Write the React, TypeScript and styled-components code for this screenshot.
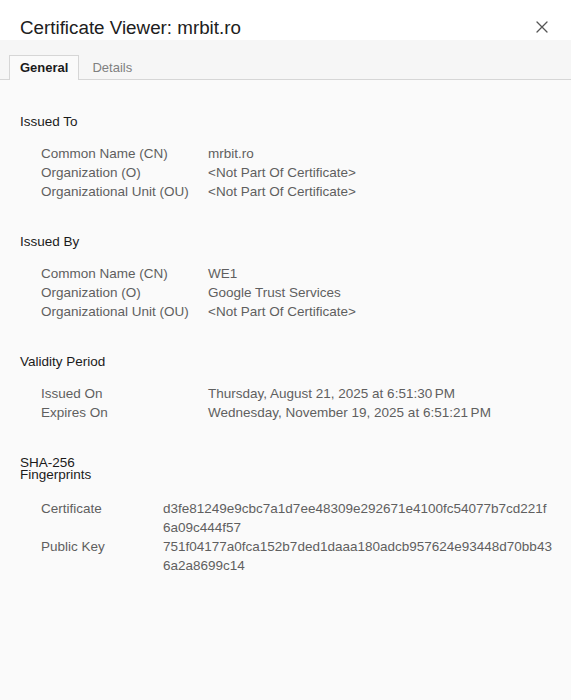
import * as React from 'react';
import styled, { createGlobalStyle } from 'styled-components';

const GlobalStyle = createGlobalStyle`
  html, body {
    margin: 0;
    padding: 0;
    background: #fafafa;
  }
  body {
    font-family: "Liberation Sans", Arial, sans-serif;
    -webkit-font-smoothing: antialiased;
  }
`;

const Dialog = styled.div`
  min-height: 100vh;
  background: #fafafa;
  color: #5a5a5a;
  font-size: 13.5px;
`;

const Header = styled.div`
  height: 40px;
  box-sizing: border-box;
  padding: 16px 20px 0 20px;
  display: flex;
  align-items: flex-start;
  justify-content: space-between;
  background: #ffffff;
`;

const Title = styled.h1`
  margin: 0;
  font-size: 18.8px;
  line-height: 24px;
  font-weight: 400;
  color: #202020;
`;

const CloseButton = styled.button`
  margin: 3px 1px 0 0;
  padding: 0;
  width: 16px;
  height: 16px;
  border: none;
  background: transparent;
  display: flex;
  align-items: center;
  justify-content: center;
  cursor: pointer;
`;

const TabStrip = styled.div`
  display: flex;
  gap: 2px;
  padding: 15px 9px 0 9px;
  background: #f6f6f6;
  border-bottom: 1px solid #d6d6d6;
`;

const Tab = styled.div<{ $active?: boolean }>`
  height: 24px;
  line-height: 24px;
  padding: 0 10px;
  margin-bottom: -1px;
  font-size: 13px;
  border: 1px solid ${(p) => (p.$active ? '#d6d6d6' : 'transparent')};
  border-bottom: none;
  background: ${(p) => (p.$active ? '#fafafa' : 'transparent')};
  color: ${(p) => (p.$active ? '#1a1a1a' : '#808080')};
  font-weight: ${(p) => (p.$active ? 700 : 400)};
`;

const Content = styled.div`
  padding: 36px 20px 40px 20px;
  display: flex;
  flex-direction: column;
  gap: 35px;
`;

const Section = styled.section`
  display: flex;
  flex-direction: column;
  gap: 16px;
`;

// the fingerprint heading wraps onto two lines
const Heading = styled.h2<{ $narrow?: boolean }>`
  margin: 0 0 ${(p) => (p.$narrow ? '2px' : '0')} 0;
  font-size: 13.5px;
  line-height: 12px;
  font-weight: 400;
  color: #1a1a1a;
  max-width: ${(p) => (p.$narrow ? '90px' : 'none')};
`;

const Rows = styled.div<{ $labelWidth: number }>`
  display: grid;
  grid-template-columns: ${(p) => p.$labelWidth}px 1fr;
  padding-left: 21px;
  line-height: 19px;
`;

const Label = styled.div`
  color: #5f5f5f;
`;

const Value = styled.div`
  color: #5f5f5f;
`;

const HashLine = styled.div`
  white-space: nowrap;
`;

type Row = { label: string; value: string; hash?: boolean };
type Group = { title: string; labelWidth: number; narrow?: boolean; rows: Row[] };

const NOT_PART = '<Not Part Of Certificate>';

const groups: Group[] = [
  {
    title: 'Issued To',
    labelWidth: 167,
    rows: [
      { label: 'Common Name (CN)', value: 'mrbit.ro' },
      { label: 'Organization (O)', value: NOT_PART },
      { label: 'Organizational Unit (OU)', value: NOT_PART },
    ],
  },
  {
    title: 'Issued By',
    labelWidth: 167,
    rows: [
      { label: 'Common Name (CN)', value: 'WE1' },
      { label: 'Organization (O)', value: 'Google Trust Services' },
      { label: 'Organizational Unit (OU)', value: NOT_PART },
    ],
  },
  {
    title: 'Validity Period',
    labelWidth: 167,
    rows: [
      { label: 'Issued On', value: 'Thursday, August 21, 2025 at 6:51:30\u202FPM' },
      { label: 'Expires On', value: 'Wednesday, November 19, 2025 at 6:51:21\u202FPM' },
    ],
  },
  {
    title: 'SHA-256 Fingerprints',
    labelWidth: 122,
    narrow: true,
    rows: [
      {
        label: 'Certificate',
        value: 'd3fe81249e9cbc7a1d7ee48309e292671e4100fc54077b7cd221f6a09c444f57',
        hash: true,
      },
      {
        label: 'Public Key',
        value: '751f04177a0fca152b7ded1daaa180adcb957624e93448d70bb436a2a8699c14',
        hash: true,
      },
    ],
  },
];

// fingerprints wrap after 53 hex digits
const chunk = (s: string, n: number) => {
  const out: string[] = [];
  for (let i = 0; i < s.length; i += n) out.push(s.slice(i, i + n));
  return out;
};

const CloseIcon = () => (
  <svg width="12" height="12" viewBox="0 0 12 12">
    <path d="M1 1 L11 11 M11 1 L1 11" stroke="#555" strokeWidth="1.3" strokeLinecap="round" />
  </svg>
);

export default function App() {
  return (
    <Dialog>
      <GlobalStyle />
      <Header>
        <Title>Certificate Viewer: mrbit.ro</Title>
        <CloseButton aria-label="Close">
          <CloseIcon />
        </CloseButton>
      </Header>
      <TabStrip>
        <Tab $active>General</Tab>
        <Tab>Details</Tab>
      </TabStrip>
      <Content>
        {groups.map((g) => (
          <Section key={g.title}>
            <Heading $narrow={g.narrow}>{g.title}</Heading>
            <Rows $labelWidth={g.labelWidth}>
              {g.rows.map((r) => (
                <React.Fragment key={r.label}>
                  <Label>{r.label}</Label>
                  <Value>
                    {r.hash
                      ? chunk(r.value, 53).map((line) => <HashLine key={line}>{line}</HashLine>)
                      : r.value}
                  </Value>
                </React.Fragment>
              ))}
            </Rows>
          </Section>
        ))}
      </Content>
    </Dialog>
  );
}
